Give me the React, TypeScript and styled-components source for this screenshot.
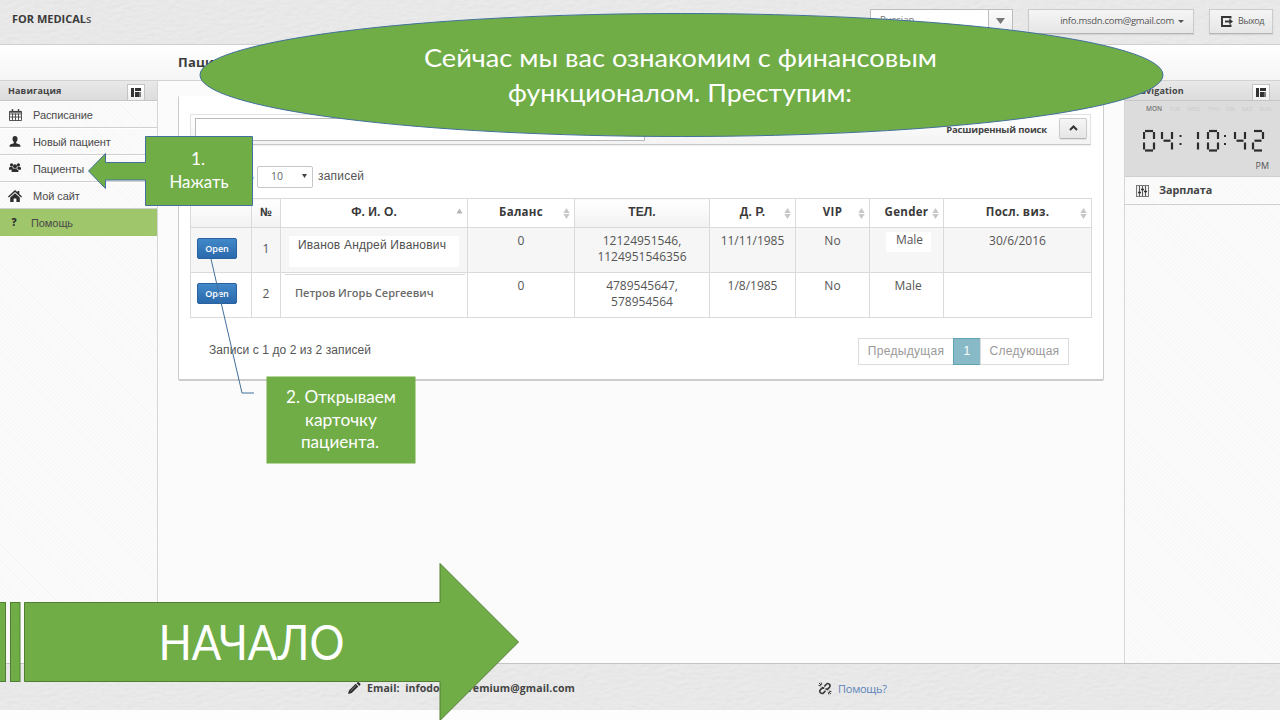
import React from "react";
import styled, { createGlobalStyle, css } from "styled-components";

const SANS = '"Open Sans", "Noto Sans", sans-serif';
const ARIAL = '"Liberation Sans", Arial, sans-serif';

const Global = createGlobalStyle`
  * { box-sizing: border-box; }
  body { margin: 0; background: #fdfdfd; font-family: ${SANS}; color: #3c3c3c; }
`;

const Page = styled.div`
  position: relative;
  display: flex;
  flex-direction: column;
  width: 1280px;
  height: 720px;
  overflow: hidden;
`;

const GrainLayer = styled.svg`
  position: absolute;
  inset: 0;
  width: 100%;
  height: 100%;
`;

const Grain = ({ id }: { id: string }) => (
  <GrainLayer aria-hidden="true">
    <filter id={id} x="0" y="0" width="100%" height="100%">
      <feTurbulence type="fractalNoise" baseFrequency="0.12 0.28" numOctaves="3" seed="4" result="n" />
      <feDiffuseLighting in="n" lightingColor="#ffffff" surfaceScale="0.6" diffuseConstant="1.02">
        <feDistantLight azimuth="60" elevation="62" />
      </feDiffuseLighting>
    </filter>
    <rect width="100%" height="100%" filter={`url(#${id})`} opacity="0.3" />
  </GrainLayer>
);

const Header = styled.header`
  position: relative;
  display: flex;
  align-items: flex-start;
  height: 45px;
  flex: none;
  padding: 9px 7px 0 12px;
  background: #e4e4e4;
  border-bottom: 1px solid #cfcfcf;
`;

const Brand = styled.div`
  flex: 1;
  position: relative;
  font-size: 11px;
  line-height: 20px;
  font-weight: 700;
  letter-spacing: 0;
  color: #3a3a3a;
  span { font-weight: 600; font-size: 11px; color: #555; }
`;

const raised = css`
  background: linear-gradient(#f5f5f5, #e6e6e6);
  border: 1px solid #cbcbcb;
  border-bottom-color: #b5b5b5;
  box-shadow: 0 1px 1px rgba(0, 0, 0, 0.08);
`;

const LanguageSelect = styled.div`
  position: relative;
  display: flex;
  width: 143px;
  height: 26px;
  margin-right: 15px;
  background: #fff;
  border: 1px solid #bcbcbc;
  font-size: 9.5px;
  line-height: 19px;
  color: #777;
  padding-left: 9px;
`;

const SelectArrow = styled.span`
  margin-left: auto;
  width: 24px;
  display: flex;
  align-items: center;
  justify-content: center;
  padding-bottom: 2px;
  border-left: 1px solid #bcbcbc;
  background: linear-gradient(#fbfbfb, #eee);
`;

const AccountButton = styled.div`
  ${raised}
  position: relative;
  display: flex;
  align-items: center;
  justify-content: flex-end;
  gap: 4px;
  width: 166px;
  height: 25px;
  padding: 0 9px 2px 0;
  margin-right: 15px;
  font-size: 9.5px;
  letter-spacing: -0.28px;
  color: #555;
  svg { margin-top: 2px; }
`;

const ExitButton = styled.div`
  ${raised}
  position: relative;
  display: flex;
  align-items: center;
  width: 64px;
  height: 25px;
  padding: 0 0 1px 11px;
  gap: 5px;
  font-size: 9px;
  letter-spacing: -0.4px;
  color: #555;
  span { margin-top: -2px; }
`;

const TitleBar = styled.div`
  display: flex;
  align-items: center;
  height: 36px;
  flex: none;
  padding: 0 0 1px 178px;
  font-size: 13px;
  font-weight: 700;
  letter-spacing: 0.2px;
  background: linear-gradient(#ffffff, #f5f5f5);
  border-bottom: 1px solid #d3d3d3;
`;

const Body = styled.div`
  display: flex;
  height: 582px;
  flex: none;
`;

const hatch = css`
  background-color: #fbfbfb;
  background-image: repeating-linear-gradient(45deg, rgba(0, 0, 0, 0.014) 0 1px, transparent 1px 3px);
`;

const Sidebar = styled.aside<{ $side: "left" | "right" }>`
  ${hatch}
  width: ${(p) => (p.$side === "left" ? 158 : 156)}px;
  flex: none;
  display: flex;
  flex-direction: column;
  border-${(p) => (p.$side === "left" ? "right" : "left")}: 1px solid #d6d6d6;
`;

const SideHead = styled.div<{ $inset: number }>`
  display: flex;
  align-items: center;
  justify-content: space-between;
  height: 20px;
  flex: none;
  padding: 0 ${(p) => p.$inset}px 0 8px;
  background: linear-gradient(#e9e9e9, #dcdcdc);
  border-bottom: 1px solid #c6c6c6;
  font-size: 9px;
  font-weight: 700;
  letter-spacing: 0.15px;
  color: #444;
`;

const PanelToggle = styled.span`
  display: flex;
  align-items: center;
  justify-content: center;
  width: 18px;
  height: 17px;
  margin-top: 3px;
  background: linear-gradient(#fff, #eee);
  border: 1px solid #c4c4c4;
`;

const NavItem = styled.div<{ $active?: boolean }>`
  display: flex;
  align-items: center;
  height: 27px;
  flex: none;
  padding-left: 8px;
  font-family: ${ARIAL};
  font-size: 11px;
  letter-spacing: -0.08px;
  color: #4a4a4a;
  border-bottom: 1px solid #d0d0d0;
  border-top: 1px solid #fff;
  ${(p) => p.$active && css`
    background: #9fc66a;
    border-color: #9fc66a;
    span { margin-left: -2px; }
    ${NavIcon} { padding: 0 2px 2px 0; }
  `}
`;

const NavIcon = styled.div`
  width: 14px;
  height: 14px;
  display: flex;
  align-items: center;
  justify-content: center;
  margin-right: 11px;
  font-family: ${SANS};
  font-weight: 800;
  font-size: 10px;
  color: #333;
`;

const Main = styled.main`
  flex: 1;
  min-width: 0;
  padding: 15px 20px 0 20px;
  background: #fbfbfb;
`;

const Card = styled.section`
  height: 285px;
  padding: 17px 12px 0 11px;
  background: #fff;
  border: 1px solid #cccccc;
  border-top-color: #fff;
  border-bottom-width: 2px;
  border-radius: 0 0 2px 2px;
`;

const SearchBar = styled.div`
  display: flex;
  align-items: center;
  height: 31px;
  padding: 0 3px 0 4px;
  background: linear-gradient(#fff, #f3f3f3);
  border: 1px solid #e2e2e2;
  border-bottom: 1px solid #c9c9c9;
  box-shadow: 0 1px 1px rgba(0, 0, 0, 0.06);
`;

const SearchInput = styled.div`
  width: 450px;
  height: 23px;
  margin-top: -1px;
  background: #fff;
  border: 1px solid #b9b9b9;
`;

const SearchLabel = styled.span`
  margin: -1px 0 0 auto;
  font-size: 9.5px;
  font-weight: 700;
  letter-spacing: -0.18px;
  color: #444;
`;

const CollapseButton = styled.div`
  ${raised}
  display: flex;
  align-items: center;
  justify-content: center;
  width: 28px;
  height: 21px;
  margin-left: 12px;
  margin-top: -3px;
  border-radius: 2px;
`;

const LengthRow = styled.div`
  display: flex;
  align-items: center;
  justify-content: flex-start;
  height: 23px;
  margin: 20px 0 10px;
  padding-bottom: 2px;
  font-family: ${ARIAL};
  font-size: 12px;
  letter-spacing: 0.2px;
  color: #555;
`;

const LengthLabel = styled.span`
  width: 64px;
  margin-right: 3px;
  text-align: right;
`;

const LengthSelect = styled.span`
  display: flex;
  align-items: center;
  justify-content: space-between;
  width: 56px;
  height: 22px;
  flex: none;
  margin: 2px 5px 0 0;
  padding: 0 5px 2px 13px;
  border: 1px solid #c6c6c6;
  border-radius: 2px;
  font-family: ${SANS};
  font-size: 10.5px;
  letter-spacing: 0;
  color: #666;
`;

const Table = styled.table`
  width: 901px;
  table-layout: fixed;
  border-collapse: collapse;
  font-size: 12px;
  line-height: 16px;
  color: #555;
`;

const Th = styled.th<{ $shade?: boolean; $arial?: boolean }>`
  position: relative;
  height: 29px;
  padding: 0 0 2px;
  border: 1px solid #dadada;
  background: ${(p) => (p.$shade ? "linear-gradient(#fff, #f2f2f2)" : "#fff")};
  font-family: ${(p) => (p.$arial ? ARIAL : SANS)};
  font-size: ${(p) => (p.$arial ? 12 : 11.5)}px;
  font-weight: 700;
  letter-spacing: ${(p) => (p.$arial ? 0.1 : 0.3)}px;
  color: #3a3a3a;
`;

const SortMark = styled.svg`
  position: absolute;
  right: 4px;
  top: 9px;
`;

const Row = styled.tr<{ $striped?: boolean }>`
  background: ${(p) => (p.$striped ? "#f6f6f6" : "#fff")};
`;

const Td = styled.td<{ $middle?: boolean; $offset?: number }>`
  height: 45px;
  padding: ${(p) => (p.$middle ? 0 : "5px")} 0 ${(p) => p.$offset ?? 0}px;
  border: 1px solid #dadada;
  text-align: center;
  vertical-align: ${(p) => (p.$middle ? "middle" : "top")};
`;

const OpenButton = styled.span`
  display: block;
  width: 40px;
  height: 21px;
  margin-left: 6px;
  border: 1px solid #2a62a0;
  border-radius: 2px;
  background: linear-gradient(#4189c9, #2a69ad);
  font-size: 9px;
  line-height: 19px;
  font-weight: 600;
  color: #fff;
`;

const FirstName = styled.div`
  width: 170px;
  height: 31px;
  margin: 3px 0 0 8px;
  padding-left: 9px;
  background: #fff;
  font-family: ${ARIAL};
  font-size: 12px;
  line-height: 19px;
  letter-spacing: 0.2px;
  text-align: left;
  white-space: nowrap;
  color: #505050;
`;

const SecondName = styled.div`
  width: 180px;
  margin: -4px 0 0 4px;
  padding: 10px 0 0 10px;
  border-top: 1px solid #dadada;
  font-size: 11px;
  font-weight: 600;
  line-height: 15px;
  text-align: left;
  white-space: nowrap;
  color: #6a6a6a;
`;

const Highlight = styled.span`
  display: block;
  width: 45px;
  height: 20px;
  margin: -1px auto 0 16px;
  padding-left: 2px;
  background: #fff;
`;

const TableFoot = styled.div`
  display: flex;
  align-items: center;
  justify-content: space-between;
  height: 27px;
  margin-top: 20px;
  padding: 0 22px 0 19px;
  font-family: ${ARIAL};
  font-size: 12px;
  letter-spacing: 0.08px;
  color: #555;
`;

const FootText = styled.span`
  margin-top: -4px;
`;

const Pager = styled.div`
  display: flex;
  height: 27px;
`;

const PageLink = styled.span<{ $current?: boolean; $width: number }>`
  width: ${(p) => p.$width}px;
  border: 1px solid ${(p) => (p.$current ? "#5fa3b4" : "#dcdcdc")};
  background: ${(p) => (p.$current ? "#87b9c7" : "#fff")};
  color: ${(p) => (p.$current ? "#fff" : "#9a9a9a")};
  line-height: 25px;
  text-align: center;
  letter-spacing: 0.3px;
  & + & { margin-left: -1px; }
`;

const Clock = styled.div`
  height: 76px;
  flex: none;
  background: #dcdcdc;
  border-bottom: 1px solid #cfcfcf;
`;

const Days = styled.div`
  display: flex;
  gap: 7px;
  padding: 4px 0 0 21px;
  font-size: 6px;
  line-height: 8px;
  height: 26px;
  color: #cacaca;
  b { font-weight: 600; color: #777; font-size: 6.5px; }
`;

const Period = styled.div`
  padding-right: 11px;
  text-align: right;
  font-size: 9px;
  line-height: 12px;
  margin-top: 5px;
  color: #555;
`;

const Digits = styled.svg`
  display: block;
  margin-left: 18px;
`;

const SalaryItem = styled.div`
  display: flex;
  align-items: center;
  gap: 10px;
  height: 28px;
  flex: none;
  padding: 0 0 3px 11px;
  border-bottom: 1px solid #cfcfcf;
  font-size: 10.800px;
  font-weight: 700;
  color: #444;
  svg { margin-top: 3px; }
`;

const Footer = styled.footer`
  position: relative;
  display: flex;
  align-items: center;
  height: 47px;
  flex: none;
  padding: 2px 0 0 348px;
  background: #e4e4e4;
  border-top: 1px solid #c4c4c4;
  font-size: 11px;
`;

const FooterContact = styled.div`
  position: relative;
  display: flex;
  align-items: center;
  gap: 6px;
  width: 470px;
  font-size: 10.5px;
  font-weight: 700;
  letter-spacing: 0.1px;
  white-space: pre;
  color: #444;
`;

const HelpLink = styled.div`
  position: relative;
  display: flex;
  align-items: center;
  gap: 6px;
  letter-spacing: -0.25px;
  color: #5b83b8;
`;

const Annotations = styled.svg`
  position: absolute;
  inset: 0;
  z-index: 2;
  pointer-events: none;
  text { fill: #fff; font-family: Lato, Carlito, "Open Sans", sans-serif; }
`;

const PanelIcon = () => (
  <svg width="10" height="9" viewBox="0 0 10 9" fill="#333" shapeRendering="crispEdges">
    <path d="M0 0H3V9H0zM4 0H10V3H4zM4 4H8V9H4z" />
    <path d="M8 4H10V9H8z" fill="#777" />
  </svg>
);

const CalendarIcon = () => (
  <svg width="13" height="12" viewBox="0 0 13 12" fill="none" stroke="#444">
    <path d="M.5 2.500h12v9H.5zM.5 5h12M.5 8h12M3.500 4.500v7M6.500 4.500v7M9.500 4.500v7" strokeWidth=".9" />
    <path d="M.5 2.800h12" strokeWidth="1.800" />
    <path d="M3.500 0v2.500M9.500 0v2.500" strokeWidth="1.400" />
  </svg>
);

const PersonIcon = () => (
  <svg width="12" height="11" viewBox="0 0 12 11" fill="#2e2e2e">
    <ellipse cx="6" cy="3.100" rx="2.500" ry="3" />
    <path d="M4.800 5h2.400v2.200l3.500 1.400q.8.500.8 2.200H.5q0-1.700.8-2.200l3.500-1.400z" />
  </svg>
);

const GroupIcon = () => (
  <svg width="12" height="12" viewBox="0 0 12 12" fill="#2e2e2e">
    <circle cx="2.600" cy="2" r="1.700" />
    <circle cx="9.400" cy="2" r="1.700" />
    <circle cx="6" cy="3.200" r="2" />
    <path d="M0 6.800V5q0-1 1.200-1h2.200l.8 2.800zM12 6.800V5q0-1-1.200-1H8.600l-.8 2.800zM2.600 9V7q0-1.500 1.600-1.500h3.600q1.600 0 1.600 1.500v2z" />
  </svg>
);

const HouseIcon = () => (
  <svg width="14" height="12" viewBox="0 0 14 12" fill="#2e2e2e">
    <path d="M7 0l2.500 2.300V1h1.800v3L14 6.500l-.9 1L7 2 .9 7.500l-.9-1z" />
    <path d="M7 3.300l4.800 4.300V12H8.400V8.500H5.600V12H2.200V7.600z" />
  </svg>
);

const ExitIcon = () => (
  <svg width="12" height="11" viewBox="0 0 12 11" fill="none" stroke="#333" strokeWidth="1.900">
    <path d="M9.500 2.600V1H1v9h8.500V8.400" />
    <path d="M4 5.500h5" />
    <path d="M8.300 2.500L12 5.500 8.300 8.500z" fill="#333" stroke="none" />
  </svg>
);

const SlidersIcon = () => (
  <svg width="13" height="12" viewBox="0 0 13 12" fill="none" stroke="#555">
    <rect x=".5" y=".5" width="12" height="11" fill="#eee" stroke="#777" />
    <path d="M3.500 1v10M6.500 1v10M9.500 1v10" />
    <path d="M2 7.500h3M5 4.500h3M8 6.500h3" stroke="#333" strokeWidth="1.600" />
  </svg>
);

const PencilIcon = () => (
  <svg width="13" height="12" viewBox="0 0 13 12" fill="#2e2e2e">
    <path d="M0 12l1.100-3.700 6.600-6.500 2.600 2.600-6.600 6.500zM8.500 1.100L9.300.4q.8-.7 1.700 0l1.100 1q.8.800 0 1.700l-.9.800z" />
    <path d="M2.300 9.200l5.900-5.800" stroke="#bbb" strokeWidth=".6" />
  </svg>
);

const BrokenLinkIcon = () => (
  <svg width="14" height="13" viewBox="0 0 14 13" fill="none" stroke="#383838" strokeWidth="1.600">
    <path d="M6.300 4.500l2-2.300q1.300-1.300 2.900-.1 1.600 1.500.3 3L9.300 7.500 7.500 6.800" />
    <path d="M7.500 8.700l-2 2.200q-1.300 1.200-2.900 0-1.600-1.500-.3-3l2.200-2.300 1.800.7" />
    <path d="M.5 3.300l2.600.7M3 .5l.9 2.400M13.500 9.700l-2.600-.7M11 12.500l-.9-2.400M1 1l2 2M13 12l-2-2" strokeWidth="1" />
  </svg>
);

const Sort = ({ up }: { up?: boolean }) => (
  <SortMark width="7" height="11" viewBox="0 0 7 11" fill={up ? "#b5b5b5" : "#c8c8c8"}>
    {up ? <path d="M.5 5.500L3.500 .5l3 5z" /> : <path d="M.3 5L3.500 0l3.200 5zM.3 6h6.400L3.500 11z" />}
  </SortMark>
);

/* Seven-segment glyphs: a top, b/c right, d bottom, e/f left, g middle. */
const SEGMENTS: Record<string, string> = {
  a: "M2 1H10",
  b: "M11 2V9",
  c: "M11 12.500V19.500",
  d: "M2 20.500H10",
  e: "M1 12.500V19.500",
  f: "M1 2V9",
  g: "M2.500 10.700H9.500",
};
const GLYPHS: Record<string, string> = { "0": "abcdef", "1": "bc", "2": "abged", "4": "fgbc" };
const TIME: [string, number][] = [["0", 0], ["4", 18], ["1", 44], ["0", 64], ["4", 91], ["2", 109]];

const App = () => (
  <Page>
    <Global />
    <Header>
      <Grain id="grain-top" />
      <Brand>FOR MEDICAL<span>s</span></Brand>
      <LanguageSelect>
        Russian
        <SelectArrow>
          <svg width="9" height="6" viewBox="0 0 9 6"><path d="M0 0h9L4.500 6z" fill="#777" /></svg>
        </SelectArrow>
      </LanguageSelect>
      <AccountButton>
        info.msdn.com@gmail.com
        <svg width="6" height="3" viewBox="0 0 6 3"><path d="M0 0h6L3 3z" fill="#555" /></svg>
      </AccountButton>
      <ExitButton><ExitIcon /><span>Выход</span></ExitButton>
    </Header>
    <TitleBar>Пациенты</TitleBar>

    <Body>
      <Sidebar $side="left">
        <SideHead $inset={12}>Навигация<PanelToggle><PanelIcon /></PanelToggle></SideHead>
        <NavItem><NavIcon><CalendarIcon /></NavIcon><span>Расписание</span></NavItem>
        <NavItem><NavIcon><PersonIcon /></NavIcon><span>Новый пациент</span></NavItem>
        <NavItem><NavIcon><GroupIcon /></NavIcon><span>Пациенты</span></NavItem>
        <NavItem><NavIcon><HouseIcon /></NavIcon><span>Мой сайт</span></NavItem>
        <NavItem $active><NavIcon>?</NavIcon><span>Помощь</span></NavItem>
      </Sidebar>

      <Main>
        <Card>
          <SearchBar>
            <SearchInput />
            <SearchLabel>Расширенный поиск</SearchLabel>
            <CollapseButton>
              <svg width="9" height="6" viewBox="0 0 9 6" fill="none" stroke="#333" strokeWidth="2"><path d="M1 5l3.500-3.500L8 5" /></svg>
            </CollapseButton>
          </SearchBar>
          <LengthRow>
            <LengthLabel>Показать</LengthLabel>
            <LengthSelect>
              10
              <svg width="5" height="4" viewBox="0 0 5 4"><path d="M0 0h5L2.500 4z" fill="#444" /></svg>
            </LengthSelect>
            записей
          </LengthRow>
          <Table>
            <colgroup>
              <col width="61" /><col width="29" /><col width="187" /><col width="107" /><col width="135" />
              <col width="86" /><col width="74" /><col width="74" /><col width="148" />
            </colgroup>
            <thead>
              <tr>
                <Th $shade />
                <Th $shade>№</Th>
                <Th $arial>Ф. И. О.<Sort up /></Th>
                <Th>Баланс<Sort /></Th>
                <Th $shade $arial>ТЕЛ.</Th>
                <Th $arial>Д. Р.<Sort /></Th>
                <Th>VIP<Sort /></Th>
                <Th>Gender<Sort /></Th>
                <Th>Посл. виз.<Sort /></Th>
              </tr>
            </thead>
            <tbody>
              <Row $striped>
                <Td $middle $offset={3}><OpenButton>Open</OpenButton></Td>
                <Td $middle $offset={3}>1</Td>
                <Td><FirstName>Иванов Андрей Иванович</FirstName></Td>
                <Td>0</Td>
                <Td>12124951546, 1124951546356</Td>
                <Td>11/11/1985</Td>
                <Td>No</Td>
                <Td><Highlight>Male</Highlight></Td>
                <Td>30/6/2016</Td>
              </Row>
              <Row>
                <Td $middle $offset={3}><OpenButton>Open</OpenButton></Td>
                <Td $middle $offset={3}>2</Td>
                <Td><SecondName>Петров Игорь Сергеевич</SecondName></Td>
                <Td>0</Td>
                <Td>4789545647,<br />578954564</Td>
                <Td>1/8/1985</Td>
                <Td>No</Td>
                <Td>&nbsp;Male</Td>
                <Td />
              </Row>
            </tbody>
          </Table>
          <TableFoot>
            <FootText>Записи с 1 до 2 из 2 записей</FootText>
            <Pager>
              <PageLink $width={96}>Предыдущая</PageLink>
              <PageLink $width={28} $current>1</PageLink>
              <PageLink $width={89}>Следующая</PageLink>
            </Pager>
          </TableFoot>
        </Card>
      </Main>

      <Sidebar $side="right">
        <SideHead $inset={10}>Navigation<PanelToggle><PanelIcon /></PanelToggle></SideHead>
        <Clock>
          <Days><b>MON</b><span>TUE</span><span>WED</span><span>THU</span><span>FRI</span><span>SAT</span><span>SUN</span></Days>
          <Digits width="126" height="28" viewBox="0 -3 126 28" stroke="#2c2c2c" strokeWidth="2.200" fill="none">
            {TIME.map(([digit, x]) => (
              <g key={x} transform={`translate(${x} 0)`}>
                {GLYPHS[digit].split("").map((s) => <path key={s} d={SEGMENTS[s]} />)}
              </g>
            ))}
            <path d="M36.500 6h2M36.500 14h2M81 6h2M81 14h2" />
          </Digits>
          <Period>PM</Period>
        </Clock>
        <SalaryItem><SlidersIcon />Зарплата</SalaryItem>
      </Sidebar>
    </Body>

    <Footer>
      <Grain id="grain-bottom" />
      <FooterContact><PencilIcon />Email:  infodoctorpremium@gmail.com</FooterContact>
      <HelpLink><BrokenLinkIcon />Помощь?</HelpLink>
    </Footer>

    <Annotations width="1280" height="720" viewBox="0 0 1280 720">
      <g fill="#70ad47" stroke="#41719c">
        <ellipse cx="681.500" cy="75" rx="481.500" ry="61.500" />
        <path d="M145.500 136.500H252.500V205.500H145.500V180H105.500V188.500L88.500 171L105.500 153.500V162.500H145.500Z" />
      </g>
      <rect x="266.500" y="376.500" width="149" height="87" fill="#70ad47" />
      <path d="M211 259L242 393H254" fill="none" stroke="#41719c" />
      <g fill="#70ad47" stroke="#507e32">
        <rect x="-5" y="602.500" width="10.500" height="79" />
        <rect x="10.500" y="602.500" width="9.500" height="79" />
        <path d="M24.500 602.500H440V563.500L518.500 642L440 720.500V681.500H24.500Z" />
      </g>
      <g fontSize="25.500">
        <text x="424" y="66.500" textLength="513" lengthAdjust="spacingAndGlyphs">Сейчас мы вас ознакомим с финансовым</text>
        <text x="508" y="102" textLength="344" lengthAdjust="spacingAndGlyphs">функционалом. Преступим:</text>
      </g>
      <g fontSize="17.500">
        <text x="191" y="165" textLength="14" lengthAdjust="spacingAndGlyphs">1.</text>
        <text x="169.500" y="188" textLength="59" lengthAdjust="spacingAndGlyphs">Нажать</text>
        <text x="286" y="403" textLength="110" lengthAdjust="spacingAndGlyphs">2. Открываем</text>
        <text x="305" y="426" textLength="72" lengthAdjust="spacingAndGlyphs">карточку</text>
        <text x="301" y="448" textLength="78" lengthAdjust="spacingAndGlyphs">пациента.</text>
      </g>
      <text x="158.500" y="659.500" fontSize="48" textLength="186" lengthAdjust="spacingAndGlyphs">НАЧАЛО</text>
    </Annotations>
  </Page>
);

export default App;
